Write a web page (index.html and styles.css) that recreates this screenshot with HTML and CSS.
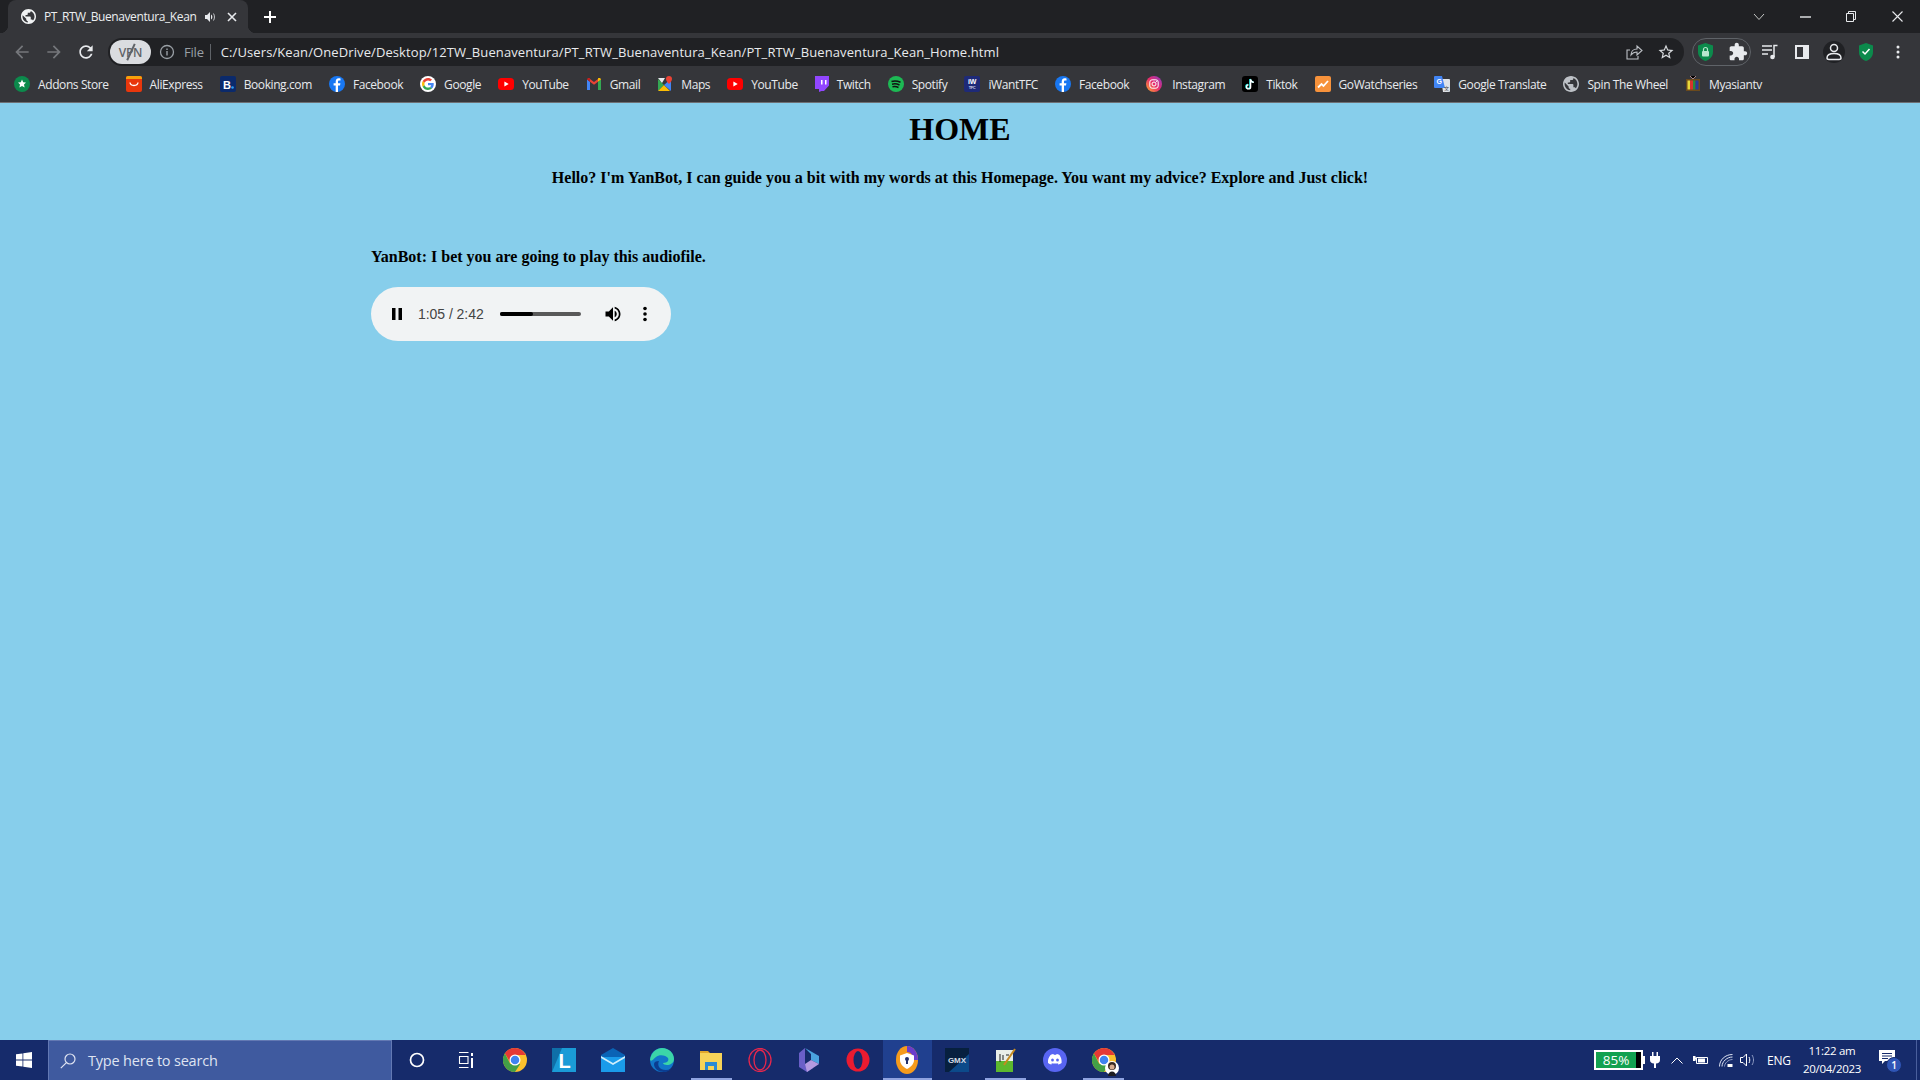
FILE: index.html
```html
<!DOCTYPE html>
<html lang="en">
<head>
<meta charset="utf-8">
<title>PT_RTW_Buenaventura_Kean</title>
<link rel="stylesheet" href="styles.css">
</head>
<body>
<svg class="defs" width="0" height="0" aria-hidden="true">
  <symbol id="fb" viewBox="0 0 16 16"><circle cx="8" cy="8" r="8" fill="#1877f2"/><path fill="#fff" d="M9 16V9.6h2l.4-2.4H9V5.9c0-.8.3-1.3 1.3-1.3h1.2V2.5c-.5-.1-1.200-.2-1.900-.2C8 2.300 6.700 3.500 6.700 5.600v1.600H4.600v2.400h2.100V16z"/></symbol>
  <symbol id="yt" viewBox="0 0 16 16"><rect y="2" width="16" height="12" rx="3.500" fill="#f00"/><path fill="#fff" d="M6.400 5.500v5L10.700 8z"/></symbol>
  <symbol id="google" viewBox="0 0 48 48"><path fill="#EA4335" d="M24 9.500c3.540 0 6.710 1.220 9.210 3.600l6.850-6.850C35.900 2.380 30.470 0 24 0 14.620 0 6.510 5.380 2.560 13.220l7.980 6.190C12.430 13.720 17.740 9.500 24 9.500z"/><path fill="#4285F4" d="M46.980 24.550c0-1.570-.15-3.090-.38-4.550H24v9.020h12.940c-.58 2.960-2.260 5.480-4.780 7.180l7.730 6c4.510-4.180 7.090-10.360 7.090-17.650z"/><path fill="#FBBC05" d="M10.530 28.590c-.48-1.450-.76-2.990-.76-4.590s.27-3.140.76-4.590l-7.980-6.190C.92 16.460 0 20.120 0 24c0 3.880.92 7.540 2.560 10.780l7.970-6.190z"/><path fill="#34A853" d="M24 48c6.480 0 11.930-2.130 16.080-5.810l-7.730-6c-2.150 1.450-4.920 2.300-8.350 2.300-6.260 0-11.570-4.220-13.470-9.910l-7.980 6.190C6.510 42.620 14.620 48 24 48z"/></symbol>
  <symbol id="globe" viewBox="2 2 20 20"><path fill="currentColor" d="M12 2C6.480 2 2 6.480 2 12s4.480 10 10 10 10-4.480 10-10S17.520 2 12 2zm-1 17.930c-3.950-.49-7-3.850-7-7.930 0-.62.08-1.210.21-1.790L9 15v1c0 1.100.9 2 2 2v1.930zm6.900-2.540c-.26-.81-1-1.390-1.900-1.390h-1v-3c0-.55-.45-1-1-1H8v-2h2c.55 0 1-.45 1-1V7h2c1.100 0 2-.9 2-2v-.41c2.930 1.190 5 4.060 5 7.410 0 2.080-.8 3.970-2.100 5.390z"/></symbol>
  <symbol id="chrome" viewBox="0 0 48 48"><circle cx="24" cy="24" r="24" fill="#fbc02d"/><path fill="#e53935" d="M24 0C15.600 0 8.200 4.400 3.900 10.900L14.500 29 24 14h21.300C41.300 5.700 33.300 0 24 0z"/><path fill="#43a047" d="M3.900 10.900A24 24 0 0 0 24 48l10.400-16H14.500z"/><circle cx="24" cy="24" r="11" fill="#fff"/><circle cx="24" cy="24" r="8.500" fill="#3f83f0"/></symbol>
</svg>

<header class="browser">
  <div class="tabstrip">
    <div class="tab">
      <svg class="tab-globe" width="15" height="15"><use href="#globe"/></svg>
      <span class="tab-title">PT_RTW_Buenaventura_Kean</span>
      <svg class="tab-audio" width="12" height="12" viewBox="0 0 12 12"><path fill="#e8eaed" d="M1 4v4h2l3 3V1L3 4z"/><path fill="#e8eaed" d="M7 3.500c1 .5 1.300 1.500 1.300 2.500S8 8 7 8.500z"/><path fill="none" stroke="#e8eaed" stroke-width=".8" d="M9.500 2.500c1.300 2 1.300 5 0 7"/></svg>
      <svg class="tab-close" width="10" height="10" viewBox="0 0 10 10"><path stroke="#e8eaed" stroke-width="1.600" d="M1 1l8 8M9 1L1 9"/></svg>
    </div>
    <svg class="tab-new" width="14" height="14" viewBox="0 0 14 14"><path stroke="#fff" stroke-width="2" d="M7 1v12M1 7h12"/></svg>
    <div class="win-controls">
      <svg class="wc-chevron" width="12" height="8" viewBox="0 0 12 8"><path fill="none" stroke="#c4c7c5" d="M1 1l5 5.500L11 1"/></svg>
      <svg class="wc-min" width="11" height="2" viewBox="0 0 11 2"><path stroke="#e8eaed" stroke-width="1.400" d="M0 1h11"/></svg>
      <svg class="wc-max" width="10" height="11" viewBox="0 0 10 11"><path fill="none" stroke="#e8eaed" d="M.5 2.500h7v8h-7zM2.500 2.500v-2h7v8h-2"/></svg>
      <svg class="wc-close" width="11" height="11" viewBox="0 0 11 11"><path stroke="#e8eaed" stroke-width="1.100" d="M.5.500l10 10M10.500.500l-10 10"/></svg>
    </div>
  </div>

  <div class="toolbar">
    <svg class="nav nav-back" width="20" height="20" viewBox="0 0 24 24"><path fill="#75777b" d="M20 11H7.830l5.590-5.590L12 4l-8 8 8 8 1.410-1.410L7.830 13H20v-2z"/></svg>
    <svg class="nav nav-fwd" width="20" height="20" viewBox="0 0 24 24"><path fill="#75777b" d="M4 11h12.170l-5.590-5.590L12 4l8 8-8 8-1.410-1.410L16.170 13H4v-2z"/></svg>
    <svg class="nav nav-reload" width="20" height="20" viewBox="0 0 24 24"><path fill="#e8eaed" d="M17.650 6.350C16.200 4.900 14.210 4 12 4c-4.420 0-7.990 3.580-7.990 8s3.570 8 7.990 8c3.730 0 6.840-2.550 7.730-6h-2.080c-.82 2.330-3.040 4-5.650 4-3.310 0-6-2.690-6-6s2.690-6 6-6c1.660 0 3.140.69 4.220 1.780L13 11h7V4l-2.350 2.350z"/></svg>
    <div class="omnibox">
      <span class="vpn">VPN<i class="vpn-slash"></i></span>
      <svg class="omni-info" width="16" height="16" viewBox="0 0 16 16"><circle cx="8" cy="8" r="6.500" fill="none" stroke="#9aa0a6" stroke-width="1.300"/><path fill="#9aa0a6" d="M7.300 7h1.400v4.500H7.300zM7.300 4.500h1.400v1.400H7.300z"/></svg>
      <span class="omni-file">File</span>
      <span class="omni-sep"></span>
      <span class="omni-url">C:/Users/Kean/OneDrive/Desktop/12TW_Buenaventura/PT_RTW_Buenaventura_Kean/PT_RTW_Buenaventura_Kean_Home.html</span>
      <svg class="omni-share" width="18" height="18" viewBox="0 0 18 18"><path fill="none" stroke="#bdc1c6" stroke-width="1.100" d="M5 7H2v9h11v-3M6 12c0-3.500 2.500-6 6-6V3l5 4.500L12 12V9c-2.500 0-4.500 1-6 3z"/></svg>
      <svg class="omni-star" width="18" height="18" viewBox="0 0 24 24"><path fill="#d7dadd" d="M22 9.240l-7.190-.62L12 2 9.190 8.630 2 9.240l5.460 4.730L5.820 21 12 17.270 18.180 21l-1.630-7.030L22 9.240zM12 15.400l-3.760 2.270 1-4.280-3.320-2.880 4.380-.38L12 6.100l1.710 4.040 4.380.38-3.320 2.880 1 4.280L12 15.400z"/></svg>
    </div>
    <div class="ext-group">
      <svg width="15" height="18" viewBox="0 0 15 18"><path fill="#0c8a4c" d="M7.500 0L15 2.500V9c0 4.500-3.500 7.800-7.500 9C3.500 16.800 0 13.500 0 9V2.500z"/><rect x="4" y="8" width="7" height="5.500" rx="1" fill="#b9e7cf"/><path fill="none" stroke="#b9e7cf" stroke-width="1.200" d="M5.500 8V6.500a2 2 0 0 1 4 0V8"/></svg>
      <svg class="ext-puzzle" width="20" height="20" viewBox="0 0 24 24"><path fill="#e8eaed" d="M20.500 11H19V7c0-1.100-.9-2-2-2h-4V3.500C13 2.120 11.880 1 10.500 1S8 2.120 8 3.500V5H4c-1.100 0-1.990.9-1.990 2v3.800H3.500c1.490 0 2.700 1.210 2.700 2.700s-1.210 2.700-2.700 2.700H2V20c0 1.100.9 2 2 2h3.800v-1.500c0-1.490 1.210-2.700 2.700-2.700 1.490 0 2.700 1.210 2.700 2.700V22H17c1.100 0 2-.9 2-2v-4h1.500c1.380 0 2.500-1.120 2.500-2.500S21.880 11 20.500 11z"/></svg>
    </div>
    <svg class="tool-media" width="16" height="16" viewBox="0 0 16 16"><path stroke="#e8eaed" stroke-width="1.400" d="M0 2h10M0 6h10M0 10h6"/><path fill="none" stroke="#e8eaed" stroke-width="1.500" d="M12 13V1.500h3.500"/><circle cx="10.500" cy="13" r="2.300" fill="#e8eaed"/></svg>
    <svg class="tool-panel" width="14" height="14" viewBox="0 0 14 14"><path fill="#e8eaed" d="M0 0h14v14H0z"/><path fill="#35363a" d="M2 2h6v10H2z"/></svg>
    <span class="tool-profile"><svg width="16" height="18" viewBox="0 0 16 18"><circle cx="8" cy="5" r="3.500" fill="none" stroke="#e8eaed" stroke-width="1.500"/><path fill="none" stroke="#e8eaed" stroke-width="1.500" d="M1 15c0-3 3-4.500 7-4.500s7 1.500 7 4.500c0 1-1 1.500-2 1.500H3c-1 0-2-.5-2-1.500z"/></svg></span>
    <svg class="tool-shield" width="14" height="18" viewBox="0 0 14 18"><path fill="#0c8a4c" d="M7 0l7 2.500V9c0 4.500-3 7.800-7 9-4-1.200-7-4.500-7-9V2.500z"/><path fill="none" stroke="#fff" stroke-width="1.500" d="M3.500 8.500l2.500 2.500 4.500-5"/></svg>
    <svg class="tool-menu" width="4" height="14" viewBox="0 0 4 14"><circle cx="2" cy="2" r="1.500" fill="#e8eaed"/><circle cx="2" cy="7" r="1.500" fill="#e8eaed"/><circle cx="2" cy="12" r="1.500" fill="#e8eaed"/></svg>
  </div>

  <nav class="bookmarks">
    <a class="bm"><svg width="16" height="16" viewBox="0 0 16 16"><circle cx="8" cy="8" r="8" fill="#0c8a4c"/><path fill="#fff" d="M8 3.500l1.200 2.800 2.800.2-2 2 .6 3L8 10l-2.600 1.500.6-3-2-2 2.800-.2z"/></svg><span>Addons Store</span></a>
    <a class="bm"><svg width="16" height="16" viewBox="0 0 16 16"><rect width="16" height="16" rx="2" fill="#e8370c"/><path fill="#f7a10b" d="M0 2a2 2 0 0 1 2-2h12a2 2 0 0 1 2 2v1H0z"/><path fill="none" stroke="#fff" stroke-width="1.300" d="M4 6.500c.5 4 7.500 4 8 0"/></svg><span>AliExpress</span></a>
    <a class="bm"><svg width="16" height="16" viewBox="0 0 16 16"><rect width="16" height="16" rx="2" fill="#0b2a6b"/><text x="3" y="12.500" class="svg-b">B</text><circle cx="12.500" cy="11.500" r="1.300" fill="#2a9df4"/></svg><span>Booking.com</span></a>
    <a class="bm"><svg width="16" height="16"><use href="#fb"/></svg><span>Facebook</span></a>
    <a class="bm"><span class="g-wrap"><svg width="12" height="12"><use href="#google"/></svg></span><span>Google</span></a>
    <a class="bm"><svg width="16" height="16"><use href="#yt"/></svg><span>YouTube</span></a>
    <a class="bm"><svg width="16" height="16" viewBox="0 0 16 16"><path fill="#4285f4" d="M1 14V3.500L4 5.700V14z"/><path fill="#34a853" d="M12 14V5.700l3-2.200V14z"/><path fill="#ea4335" d="M4 5.700V3L8 6l4-3v2.700L8 8.700z"/><path fill="#c5221f" d="M1 3.500C1 2 2.800 1.400 4 2.300V5.700z"/><path fill="#fbbc04" d="M12 2.300c1.200-.9 3-.3 3 1.200L12 5.700z"/></svg><span>Gmail</span></a>
    <a class="bm"><svg width="16" height="16" viewBox="0 0 16 16"><path fill="#34a853" d="M1 3l6 6-6 6z"/><path fill="#fbbc04" d="M1 15l6-6 6 6z"/><path fill="#4285f4" d="M7 9l7-6v12z"/><path fill="#e8eaed" d="M1 2h7l-3 5z"/><path fill="#ea4335" d="M12 0a3 3 0 0 1 3 3c0 2-3 5-3 5S9 5 9 3a3 3 0 0 1 3-3z"/></svg><span>Maps</span></a>
    <a class="bm"><svg width="16" height="16"><use href="#yt"/></svg><span>YouTube</span></a>
    <a class="bm"><svg width="14" height="16" viewBox="0 0 14 16"><path fill="#9146ff" d="M0 0h14v9.500L9 15H6.500L4 16v-3H0z"/><path fill="#fff" d="M6 4h1.500v4.500H6zM10 4h1.500v4.500H10z"/></svg><span>Twitch</span></a>
    <a class="bm"><svg width="16" height="16" viewBox="0 0 16 16"><circle cx="8" cy="8" r="8" fill="#1db954"/><path fill="none" stroke="#111" stroke-width="1.500" d="M3.500 5.500c3-.8 6-.6 9 .8M4 8.200c2.500-.6 5-.4 7.500.8M4.500 10.800c2-.4 4-.3 6 .7"/></svg><span>Spotify</span></a>
    <a class="bm"><svg width="16" height="16" viewBox="0 0 16 16"><rect width="16" height="16" rx="2" fill="#1e2a78"/><text x="8" y="8" class="svg-w">iW</text><text x="8" y="13" class="svg-tfc">TFC</text></svg><span>iWantTFC</span></a>
    <a class="bm"><svg width="16" height="16"><use href="#fb"/></svg><span>Facebook</span></a>
    <a class="bm bm-wide"><svg width="16" height="16" viewBox="0 0 16 16"><defs><linearGradient id="ig" x1="0" y1="1" x2="1" y2="0"><stop offset="0" stop-color="#fdb32b"/><stop offset=".5" stop-color="#e92c6c"/><stop offset="1" stop-color="#8a3ac8"/></linearGradient></defs><circle cx="8" cy="8" r="8" fill="url(#ig)"/><rect x="3.800" y="3.800" width="8.400" height="8.400" rx="2.300" fill="none" stroke="#fff"/><circle cx="8" cy="8" r="2" fill="none" stroke="#fff"/><circle cx="10.500" cy="5.500" r=".6" fill="#fff"/></svg><span>Instagram</span></a>
    <a class="bm"><svg width="16" height="16" viewBox="0 0 16 16"><rect width="16" height="16" rx="3" fill="#000"/><path fill="none" stroke="#25f4ee" stroke-width="1.600" d="M8 3v7.500a2 2 0 1 1-2-2M8 3c.3 1.800 1.500 2.800 3.300 3"/><path fill="none" stroke="#fff" stroke-width="1.400" d="M8.600 3.400v7.500a2 2 0 1 1-2-2M8.600 3.400c.3 1.800 1.500 2.800 3.300 3"/></svg><span>Tiktok</span></a>
    <a class="bm"><svg width="16" height="16" viewBox="0 0 16 16"><rect width="16" height="16" rx="2" fill="#f7923b"/><path fill="none" stroke="#fff" stroke-width="1.800" d="M3 11.500L6.500 8l2 2L13 5"/></svg><span>GoWatchseries</span></a>
    <a class="bm"><svg width="16" height="16" viewBox="0 0 16 16"><path fill="#dfe3e8" d="M7 3h8a1 1 0 0 1 1 1v11a1 1 0 0 1-1 1H9z"/><path fill="#4285f4" d="M1 0h7l3 12H1a1 1 0 0 1-1-1V1a1 1 0 0 1 1-1z"/><text x="2.500" y="8" class="svg-g">G</text><text x="10" y="13.500" class="svg-x">文</text></svg><span>Google Translate</span></a>
    <a class="bm"><svg class="gray-globe" width="16" height="16"><use href="#globe"/></svg><span>Spin The Wheel</span></a>
    <a class="bm"><svg width="16" height="16" viewBox="0 0 16 16"><path stroke="#a88" d="M5 0l3 3 3-3"/><rect x="1" y="3" width="14" height="12" fill="#6b4a1c"/><path fill="#e8d93a" d="M2.500 4.500h2.500v9H2.500z"/><path fill="#d8342c" d="M5 4.500h3v9H5z"/><path fill="#2a8a3c" d="M8 4.500h2.500v9H8z"/><path fill="#2a3a9a" d="M10.500 4.500h3v9h-3z"/></svg><span>Myasiantv</span></a>
  </nav>
</header>

<main class="page">
  <h1 class="page-title">HOME</h1>
  <p class="intro">Hello? I'm YanBot, I can guide you a bit with my words at this Homepage. You want my advice? Explore and Just click!</p>
  <section class="bot">
    <p class="bot-line">YanBot: I bet you are going to play this audiofile.</p>
    <div class="player">
      <svg class="pl-pause" width="12" height="14" viewBox="0 0 12 14"><path fill="#000" d="M1 1h3.500v12H1zM7.500 1H11v12H7.500z"/></svg>
      <span class="pl-time">1:05 / 2:42</span>
      <span class="pl-track"><span class="pl-fill"></span></span>
      <svg class="pl-vol" width="20" height="20" viewBox="0 0 24 24"><path fill="#000" d="M3 9v6h4l5 5V4L7 9H3zm13.500 3c0-1.770-1.020-3.290-2.500-4.030v8.050c1.480-.73 2.500-2.250 2.500-4.020zM14 3.230v2.060c2.890.86 5 3.540 5 6.710s-2.110 5.850-5 6.710v2.060c4.010-.91 7-4.490 7-8.770s-2.990-7.860-7-8.770z"/></svg>
      <svg class="pl-menu" width="4" height="16" viewBox="0 0 4 16"><circle cx="2" cy="2.500" r="1.800"/><circle cx="2" cy="8" r="1.800"/><circle cx="2" cy="13.500" r="1.800"/></svg>
    </div>
  </section>
</main>

<footer class="taskbar">
  <span class="start"><svg width="16" height="16" viewBox="0 0 16 16"><path fill="#fff" d="M0 2.300l6.500-.9v6.200H0zM7.300 1.300L16 0v7.600H7.300zM0 8.400h6.500v6.200L0 13.700zM7.300 8.400H16V16l-8.700-1.300z"/></svg></span>
  <div class="search">
    <svg width="16" height="16" viewBox="0 0 16 16"><circle cx="10" cy="6" r="5" fill="none" stroke="#dfe4f2" stroke-width="1.200"/><path stroke="#dfe4f2" stroke-width="1.200" d="M6.400 9.600L.8 15.200"/></svg>
    <span>Type here to search</span>
  </div>
  <div class="tb-apps">
    <span class="app"><svg width="16" height="16" viewBox="0 0 16 16"><circle cx="8" cy="8" r="6.500" fill="none" stroke="#fff" stroke-width="1.700"/></svg></span>
    <span class="app"><svg width="16" height="16" viewBox="0 0 16 16"><path fill="none" stroke="#fff" stroke-width="1.100" d="M1 .5h9.500M1 15.500h9.500M1.500 4.500h8.500v7H1.500z"/><path fill="#fff" d="M13 1h2v3h-2zM13 6h2v10h-2z"/></svg></span>
    <span class="app"><svg width="24" height="24"><use href="#chrome"/></svg></span>
    <span class="app"><svg width="24" height="24" viewBox="0 0 24 24"><rect width="24" height="24" fill="#1a9bd7"/><path fill="#0f6fa8" d="M0 0h10L0 24z"/><text x="6.500" y="19.500" class="svg-l">L</text></svg></span>
    <span class="app"><svg width="24" height="24" viewBox="0 0 24 24"><path fill="#0a63b5" d="M0 7L12 0l12 7v4H0z"/><path fill="#1a9bea" d="M0 9h24v15H0z"/><path fill="#cfeefc" d="M0 8l12 7 12-7v2l-12 7-12-7z"/></svg></span>
    <span class="app"><svg width="24" height="24" viewBox="0 0 24 24"><circle cx="12" cy="12" r="12" fill="#1176c9"/><path fill="#3bd5a8" d="M0 12C1 4 7 0 12 0c7 0 12 5 12 11 0 4-4 6-7 6-2 0-4-1-4-2 5 0 6-3 5-5-2-3-9-4-12-1-3 2-4 5-6 3z"/><path fill="#0b3d91" d="M4 16c0 5 5 8 10 8 3 0 5-1 7-3-5 2-10 1-12-2-1-2-1-4 0-6-3 0-5 1-5 3z"/></svg></span>
    <span class="app app-open-split"><svg width="22" height="20" viewBox="0 0 22 20"><path fill="#e2a82b" d="M0 1h8l2 2H0z"/><path fill="#f7d358" d="M0 3h22v17H0z"/><path fill="#2a8ad4" d="M5 12h12v8h-3v-4H8v4H5z"/></svg></span>
    <span class="app"><svg width="24" height="24" viewBox="0 0 24 24"><ellipse cx="12" cy="12" rx="11" ry="11.500" fill="none" stroke="#e5274d" stroke-width="1.300"/><ellipse cx="12" cy="12" rx="6" ry="10" fill="none" stroke="#e5274d" stroke-width="1.300"/></svg></span>
    <span class="app"><svg width="20" height="24" viewBox="0 0 20 24"><path fill="#4aa3e0" d="M6 0l14 8v8L12 12V6z"/><path fill="#6a5fc8" d="M0 5l6-5v16l8 4-6 4-8-5z"/><path fill="#b39ae0" d="M8 24l12-8-8-4-6 4z"/></svg></span>
    <span class="app"><svg width="24" height="24" viewBox="0 0 24 24"><circle cx="12" cy="12" r="11.500" fill="#ea1b30"/><ellipse cx="12" cy="12" rx="4.500" ry="9" fill="#162b6b"/></svg></span>
    <span class="app app-active"><svg width="22" height="28" viewBox="0 0 22 28"><ellipse cx="11" cy="14" rx="11" ry="14" fill="#f59b1c"/><path fill="#6b3ccc" d="M11 0c6 0 11 6 11 14h-5c0-5-2-8-6-8z"/><path fill="#fff" d="M11 7l7 2.500V14c0 4-3 7-7 9-4-2-7-5-7-9V9.500z"/><circle cx="11" cy="13" r="2" fill="#22306b"/><path fill="#22306b" d="M10 14h2v4h-2z"/></svg></span>
    <span class="app"><svg width="24" height="24" viewBox="0 0 24 24"><rect width="24" height="24" fill="#07203f"/><path fill="#0c4a8a" d="M24 6v18H4z"/><text x="12" y="15" class="svg-gmx">GMX</text></svg></span>
    <span class="app app-open"><svg width="24" height="24" viewBox="0 0 24 24"><rect x="2" y="2" width="17" height="22" fill="#e9eee9"/><path fill="#5cb82e" d="M2 13h17v11H2z"/><path stroke="#222" d="M6 6v8M9 7v5M12 7h3"/><path stroke="#c58a22" stroke-width="2" d="M10 17L21 1"/></svg></span>
    <span class="app"><svg width="24" height="24" viewBox="0 0 24 24"><circle cx="12" cy="12" r="12" fill="#5865f2"/><path fill="#fff" d="M7.500 7c1-.5 2-.8 3-.9l.4.8c.8-.1 1.400-.1 2.200 0l.4-.8c1 .1 2 .4 3 .9 1.700 2.500 2.300 5 2.100 8-1.100.8-2.200 1.300-3.300 1.600l-.8-1.200c.5-.2.900-.4 1.300-.7-2.600 1.200-5.400 1.200-8 0 .4.300.8.500 1.300.7l-.8 1.200c-1.100-.3-2.200-.8-3.300-1.600-.2-3 .4-5.500 2.500-8z"/><ellipse cx="9.500" cy="12" rx="1.400" ry="1.600" fill="#5865f2"/><ellipse cx="14.500" cy="12" rx="1.400" ry="1.600" fill="#5865f2"/></svg></span>
    <span class="app app-open"><span class="app-person"><svg width="24" height="24"><use href="#chrome"/></svg><svg class="person" width="14" height="16" viewBox="0 0 14 16"><circle cx="7" cy="8" r="7" fill="#fff"/><circle cx="7" cy="6" r="4" fill="#3a2a22"/><circle cx="7" cy="7" r="2.500" fill="#d9ad90"/><path fill="#1c1c22" d="M3 16c0-3 2-4.500 4-4.500s4 1.500 4 4.500z"/></svg></span></span>
  </div>
  <div class="tray">
    <span class="battery"><span class="bat-level">85%</span><span class="bat-empty"></span></span>
    <svg class="tr-plug" width="10" height="16" viewBox="0 0 10 16"><path fill="#fff" d="M2 0h1.500v4h3V0H8v4h2v4c0 2-1.500 3.500-4 3.500V16H4v-4.500C1.500 11.500 0 10 0 8V4h2z"/></svg>
    <svg class="tr-chev" width="12" height="7" viewBox="0 0 12 7"><path fill="none" stroke="#fff" d="M.5 6.500L6 1l5.500 5.500"/></svg>
    <svg class="tr-bat" width="16" height="10" viewBox="0 0 16 10"><path fill="none" stroke="#fff" d="M3.500 2.500h11v6h-11z"/><path fill="#fff" d="M5 3.500h7v4H5zM0 1h2.500v1.500H4v2H2.500V6H0z"/></svg>
    <svg class="tr-wifi" width="14" height="13" viewBox="0 0 14 13"><path fill="none" stroke="#dfe4f2" d="M.5 12.500C.5 6 6 .5 13.500.5M3 12.500C3 7.500 8 3 13.500 3"/><path fill="none" stroke="#8f9cc4" d="M5.500 12.500c0-3 3.500-7 8-7"/><path fill="#fff" d="M8.500 10h5v3h-5z"/></svg>
    <svg class="tr-vol" width="16" height="14" viewBox="0 0 16 14"><path fill="none" stroke="#fff" d="M.5 4.500h2.500L6.500 1v12L3 9.500H.5z"/><path fill="none" stroke="#fff" d="M9 4c1 1.800 1 4.200 0 6"/><path fill="none" stroke="#8f9cc4" d="M12 2c2 3 2 7 0 10"/></svg>
    <span class="tr-lang">ENG</span>
    <span class="clock"><span>11:22 am</span><span>20/04/2023</span></span>
    <span class="notif"><svg width="16" height="14" viewBox="0 0 16 14"><path fill="#fff" d="M0 0h16v11H6l-3 3v-3H0z"/><path stroke="#162b6b" d="M3 3.500h10M3 6h10M3 8.500h6"/></svg><span class="notif-badge">1</span></span>
    <span class="show-desktop"></span>
  </div>
</footer>
</body>
</html>
```
FILE: styles.css
```css
* { box-sizing: border-box; }
html, body { margin: 0; height: 100%; }
body {
  width: 1920px;
  height: 1080px;
  overflow: hidden;
  display: flex;
  flex-direction: column;
  background: #87ceeb;
  font-family: "Open Sans", "Liberation Sans", sans-serif;
}
.defs { position: absolute; }
svg { display: block; flex: none; }

/* Browser chrome */
.browser { flex: none; height: 103px; background: #35363a; border-bottom: 1px solid #6e7074; display: flex; flex-direction: column; }
.tabstrip { height: 33px; background: #202124; display: flex; align-items: flex-start; flex: none; }
.tab {
  position: relative;
  width: 240px; height: 33px; margin-left: 8px; padding-left: 13px;
  background: #35363a; border-radius: 8px 8px 0 0;
  display: flex; align-items: center; color: #e8eaed;
}
.tab::before, .tab::after { content: ""; position: absolute; bottom: 0; width: 8px; height: 8px; }
.tab::before { left: -8px; background: radial-gradient(circle at 0 0, #202124 8px, #35363a 8.5px); }
.tab::after { right: -8px; background: radial-gradient(circle at 100% 0, #202124 8px, #35363a 8.5px); }
.tab-globe { color: #f1f3f4; }
.tab-title { margin-left: 8px; font-size: 12px; letter-spacing: -.4px; width: 157px; white-space: nowrap; color: #eceef0; }
.tab-audio { margin-left: 3px; }
.tab-close { margin-left: 11px; }
.tab-new { margin: 10px 0 0 15px; }
.win-controls { margin-left: auto; display: flex; align-items: center; height: 33px; }
.wc-chevron { margin-right: 35px; }
.wc-min { margin-right: 35px; }
.wc-max { margin-right: 36px; }
.wc-close { margin-right: 17px; }

.toolbar { height: 33px; padding-top: 5px; display: flex; align-items: center; flex: none; }
.nav-back { margin-left: 12px; }
.nav-fwd { margin-left: 12px; }
.nav-reload { margin-left: 12px; }
.omnibox {
  height: 28px; width: 1576px; margin-left: 12px;
  background: #202124; border-radius: 14px;
  display: flex; align-items: center; padding-left: 2px;
  color: #9aa0a6; font-size: 13px;
}
.vpn {
  position: relative; width: 41px; height: 24px; border-radius: 12px; background: #dadce0;
  color: #5f6368; font-size: 12px; font-weight: 600; letter-spacing: -.3px;
  display: flex; align-items: center; justify-content: center;
}
.vpn-slash { position: absolute; left: 20px; top: 3px; width: 1.500px; height: 18px; background: #5f6368; transform: rotate(25deg); }
.omni-info { margin-left: 8px; }
.omni-file { margin-left: 9px; font-size: 13px; letter-spacing: -.2px; }
.omni-sep { width: 1px; height: 16px; background: #5f6368; margin-left: 6px; }
.omni-url { margin-left: 10px; font-size: 13px; color: #e8eaed; white-space: nowrap; letter-spacing: .1px; }
.omni-share { margin-left: auto; }
.omni-star { margin-left: 14px; margin-right: 9px; }
.ext-group {
  margin-left: 8px; width: 59px; height: 28px; border: 1px solid #5f6368; border-radius: 14px;
  display: flex; align-items: center; padding-left: 5px;
}
.ext-puzzle { margin-left: 15px; }
.tool-media { margin-left: 11px; }
.tool-panel { margin-left: 17px; }
.tool-profile { margin-left: 14px; width: 22px; height: 22px; border-radius: 50%; background: #202124; display: flex; align-items: center; justify-content: center; }
.tool-shield { margin-left: 14px; }
.tool-menu { margin-left: 23px; }

.bookmarks { flex: 1; display: flex; align-items: center; padding-left: 14px; gap: 17px; }
.bm { display: flex; align-items: center; gap: 8px; color: #e8eaed; font-size: 12px; letter-spacing: -.4px; white-space: nowrap; }
.bm-wide { gap: 10px; }
.g-wrap { width: 16px; height: 16px; background: #fff; border-radius: 50%; display: flex; align-items: center; justify-content: center; }
.gray-globe { color: #bdc1c6; }
.svg-b { font: 700 11px "Liberation Sans", sans-serif; fill: #fff; }
.svg-w { font: 700 7px "Liberation Sans", sans-serif; fill: #fff; text-anchor: middle; }
.svg-tfc { font: 700 4px "Liberation Sans", sans-serif; fill: #cfd3e8; text-anchor: middle; }
.svg-g { font: 700 7px "Liberation Sans", sans-serif; fill: #fff; }
.svg-x { font: 400 5px "Noto Sans CJK SC", sans-serif; fill: #444; }
.svg-l { font: 700 20px "Liberation Sans", sans-serif; fill: #fff; }
.svg-gmx { font: 700 8px "Liberation Sans", sans-serif; fill: #d8dde6; text-anchor: middle; }

/* Page */
.page { flex: 1; min-height: 0; padding-top: 8px; font-family: "Liberation Serif", serif; color: #000; }
.page-title { margin: 0; font-size: 32px; line-height: 37px; font-weight: 700; text-align: center; }
.intro { margin: 21px 0 0; font-size: 16px; line-height: 18px; font-weight: 700; text-align: center; }
.bot { margin: 61px 0 0 371px; }
.bot-line { margin: 0; font-size: 16px; line-height: 18px; font-weight: 700; }
.player {
  margin-top: 21px; width: 300px; height: 54px; border-radius: 27px; background: #f1f3f4;
  display: flex; align-items: center; padding-left: 20px;
}
.pl-time { margin-left: 15px; font: 14px/1 "Liberation Sans", sans-serif; color: #444; width: 66px; white-space: nowrap; letter-spacing: -.05px; }
.pl-track { margin-left: 16px; width: 81px; height: 4px; border-radius: 2px; background: #595959; display: block; }
.pl-fill { display: block; width: 33px; height: 4px; border-radius: 2px; background: #000; }
.pl-vol { margin-left: 22px; }
.pl-menu { margin-left: 20px; }

/* Taskbar */
.taskbar { flex: none; height: 40px; background: #162b6b; display: flex; align-items: stretch; color: #fff; }
.start { width: 48px; display: flex; align-items: center; justify-content: center; }
.search {
  width: 344px; background: #3f5a9f; border: 1px solid #6379b3; border-bottom: 0;
  display: flex; align-items: center; padding-left: 11px; gap: 12px;
  color: #dfe4f2; font-size: 14.500px; letter-spacing: -.2px;
}
.tb-apps { display: flex; }
.app { position: relative; width: 49.100px; display: flex; align-items: center; justify-content: center; }
.app-open::after, .app-open-split::after { content: ""; position: absolute; left: 4px; right: 4px; bottom: 0; height: 2px; background: #8fa3e0; }
.app-active { background: #20408f; }
.app-active::after { content: ""; position: absolute; left: 0; right: 0; bottom: 0; height: 2px; background: #8fa3e0; }
.app-person { position: relative; display: block; }
.person { position: absolute; right: -3px; bottom: -4px; }
.tray { margin-left: auto; display: flex; align-items: center; }
.battery { width: 49px; height: 20px; border: 2px solid #fff; background: #000; display: flex; position: relative; }
.battery::after { content: ""; position: absolute; right: -4px; top: 4px; width: 3px; height: 8px; background: #fff; }
.bat-level { width: 40px; background: #12a150; color: #fff; font-size: 13.500px; line-height: 16px; text-align: center; }
.bat-empty { flex: 1; }
.tr-plug { margin-left: 7px; }
.tr-chev { margin-left: 11px; }
.tr-bat { margin-left: 10px; }
.tr-wifi { margin-left: 10px; }
.tr-vol { margin-left: 7px; }
.tr-lang { margin-left: 11px; font-size: 12px; width: 26px; white-space: nowrap; letter-spacing: -.2px; }
.clock { margin-left: 9px; width: 60px; display: flex; flex-direction: column; align-items: center; gap: 2px; font-size: 11.500px; line-height: 16px; letter-spacing: -.3px; white-space: nowrap; }
.notif { position: relative; margin-left: 17px; margin-right: 21px; margin-bottom: 6px; }
.notif-badge {
  position: absolute; left: 7px; top: 7px; width: 16px; height: 16px; border-radius: 50%;
  background: #2f55b5; border: 1px solid #162b6b; color: #fff; font-size: 10px; line-height: 14px; text-align: center; font-weight: 600;
}
.show-desktop { align-self: stretch; width: 1px; margin-right: 3px; background: #4a5f9c; }
```
